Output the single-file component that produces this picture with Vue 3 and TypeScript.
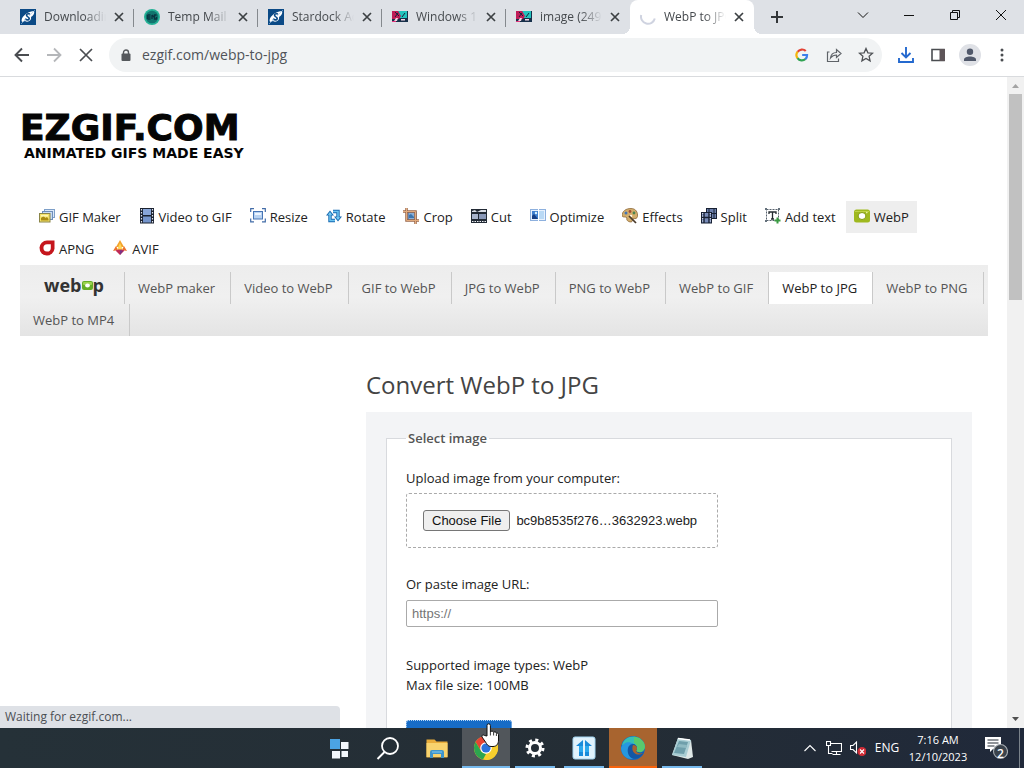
<script setup lang="ts">
import { ref } from 'vue'

interface Tab { title: string; icon: string; active?: boolean }
interface Tool { label: string; icon: string; active?: boolean }
interface TaskApp { name: string; icon: string; state: string }

const stardock = '<rect width="16" height="16" fill="#0b4a86"/><path d="M2 13C0 9 6 3 14 2c1 2-1 5-3 6 1 3-3 6-6 4z" fill="#fff"/><path d="M10 5C7 4 5 6 8 8s0 4-3 2" fill="none" stroke="#0b4a86" stroke-width="1.6"/><path d="M1 15L15 1" stroke="#9fc3e6" stroke-width=".6"/>'
const mail = '<circle cx="8" cy="8" r="8" fill="#24b196"/><circle cx="8" cy="8" r="6.3" fill="#12746e"/><path d="M3.500 6h3M3.500 8h3M3.500 10h3M3.500 6v4M8 6v4M8 6l2 2M12.500 6h-2v4h2V8" fill="none" stroke="#0a3440" stroke-width="1.300"/>'
const monitor = '<rect y="2" width="16" height="11" fill="#17304a"/><path d="M6 2h9v7H8z" fill="#22c3bd"/><path d="M0 2h6l3 5-2 3H0z" fill="#c01d58"/><path d="M3 3l4 4M6 4L3 8M10 8l3-4" stroke="#14233a"/><path d="M2 12l2-3h2l-1 3zM9 11.500h4v-1.500H9z" fill="#f5d6e4"/><path d="M0 12h4v1H0z" fill="#e2307a"/>'
const spinner = '<path d="M1.200 6A7 7 0 0 0 14.800 9.500" fill="none" stroke="#cfd3e0" stroke-width="2"/>'

const tabs: Tab[] = [
  { title: 'Downloading', icon: stardock },
  { title: 'Temp Mail -', icon: mail },
  { title: 'Stardock Ac', icon: stardock },
  { title: 'Windows 11', icon: monitor },
  { title: 'image (249×', icon: monitor },
  { title: 'WebP to JPG', icon: spinner, active: true },
]

const tools: Tool[] = [
  { label: 'GIF Maker', icon: '<rect x="5.500" y="1.500" width="10" height="8" fill="#dceafa" stroke="#7d9fc8"/><rect x="3.500" y="3.500" width="10" height="8" fill="#c8dcf5" stroke="#6f8fba"/><rect x=".5" y="5.500" width="10.500" height="8.500" fill="#f5e36a" stroke="#8a8548"/><path d="M2 12.500V10l2.500-2 2 2 1.500-1 1.500 2v1.500z" fill="#a98b13"/><path d="M2 7h7v1.500H2z" fill="#fff6b4"/>' },
  { label: 'Video to GIF', icon: '<rect x="1" width="14" height="15.500" fill="#1b2230"/><rect x="4" y="1" width="8" height="6" fill="#87a5d8"/><rect x="4" y="8.500" width="8" height="6" fill="#7595cc"/><path d="M2.500 1v14M13.500 1v14" stroke="#dfe6f2" stroke-width="1.200" stroke-dasharray="1.500 1.500"/>' },
  { label: 'Resize', icon: '<rect x="3.500" y="3.500" width="9" height="7.500" fill="#b9d3f2" stroke="#4674b5"/><rect x="5" y="5" width="6" height="2" fill="#edf5ff"/><path d="M.7 4V.7H4M12 .7h3.300V4M15.300 10.500v3.300H12M4 13.800H.7v-3.300" fill="none" stroke="#426ca8" stroke-width="1.200"/>' },
  { label: 'Rotate', icon: '<path d="M7 3.500h5V10M9 12.500H4V6" fill="none" stroke="#1769b0" stroke-width="3.400"/><path d="M8 8.500h8l-4 5zM0 7.500l4-5 4 5z" fill="#1769b0"/><path d="M7 3.500h5V10M9 12.500H4V6" fill="none" stroke="#6cc5f2" stroke-width="1.500"/><path d="M9.800 9.300h4.400L12 12zM1.800 6.700L4 4l2.200 2.700z" fill="#78cdf5"/>' },
  { label: 'Crop', icon: '<rect x="5" y="4" width="8" height="8" fill="#88afd9" stroke="#415f91"/><path d="M3.500 0v12.500H16M0 3.500h12.500V16" fill="none" stroke="#9b6749" stroke-width="2.500"/><path d="M3.500 0v12.500H16M0 3.500h12.500V16" fill="none" stroke="#e1ab7e"/><path d="M6 10V7l2-1 3 3v1z" fill="#3c75ae"/>' },
  { label: 'Cut', icon: '<rect y="1" width="16" height="14" fill="#222a35"/><path d="M1 3l3-1 2 2 4-2h5v2H1z" fill="#d9dde6"/><rect x="1" y="6" width="6" height="5" fill="#a8b4cc"/><rect x="8" y="6" width="7" height="5" fill="#8998b8"/><path d="M1 13.500h14" stroke="#edf0f5" stroke-width="1.200" stroke-dasharray="1.500 1"/>' },
  { label: 'Optimize', icon: '<rect x=".5" y="1.500" width="15" height="11" fill="#e8f1fd" stroke="#8db0de"/><rect x="2" y="3" width="6" height="8" fill="#3f80d0"/><path d="M2 11V8l2-2 4 5z" fill="#153e85"/><circle cx="6" cy="5" r="1.200" fill="#d9f2ff"/><rect x="9" y="3" width="5" height="8" fill="#b9d9f5"/><path d="M8.500 0v14" stroke="#fff"/>' },
  { label: 'Effects', icon: '<path d="M0 8C0 3 4 .5 9 .5s7 4 6.500 8c-.5 2-2 2.500-4 2L9.500 14C6 14 4 12 5 10 3.500 8 2 10 0 8z" fill="#d3ae6c" stroke="#8d6737" stroke-width=".8"/><circle cx="4" cy="5" r="1.500" fill="#4374b4"/><circle cx="8" cy="3.500" r="1.400" fill="#a44e35"/><circle cx="12" cy="5" r="1.400" fill="#4c8450"/><circle cx="9" cy="8" r="1.300" fill="#fff6e0"/><path d="M7 8l7 7" stroke="#4a3a2b" stroke-width="1.700"/>' },
  { label: 'Split', icon: '<g stroke="#172033"><rect x="5.500" y=".5" width="10" height="10" fill="#6c80ad"/><path d="M8 .5v10M13 .5v10M5.500 5.500h10"/><rect x=".5" y="4.500" width="10" height="10.500" fill="#788bb8"/><path d="M3 4.500V15M8 4.500V15M.5 9.500h10" stroke-width="1.400"/></g><path d="M1.700 5v10M9.300 5v10" stroke="#e6ebf5" stroke-dasharray="1 1.500"/>' },
  { label: 'Add text', icon: '<rect x="1.500" y="1.500" width="12" height="11" fill="#fff" stroke="#56616c" stroke-dasharray="2 1"/><path d="M4 6V4h7v2M7.500 4v7M6 11h3" fill="none" stroke="#252b30" stroke-width="1.300"/><path d="M0 0h2v2H0zM13 0h2v2h-2zM0 12h2v2H0z" fill="#65717c"/><path d="M12.500 9.500v6M9.500 12.500h6" stroke="#3b9b43" stroke-width="2"/>' },
  { label: 'WebP', icon: '<rect y="1.500" width="16" height="13" rx="2.500" fill="#9fb91f"/><path d="M1 3.500h14" stroke="#bfd345"/><ellipse cx="8" cy="8" rx="3.900" ry="3.500" fill="#fff" stroke="#829c10"/><circle cx="12.800" cy="4.600" r=".8" fill="#e9f3ac"/>', active: true },
  { label: 'APNG', icon: '<path d="M15.500.5v8A7.500 7.500 0 1 1 8 .5z" fill="#c5161d"/><path d="M11.800 4.200v4a3.700 3.700 0 1 1-3.600-4z" fill="#fff"/>' },
  { label: 'AVIF', icon: '<path d="M8 0l4 7H4z" fill="#f3a32b"/><path d="M4 6L1 11l5-1zM12 6l3 5-5-1z" fill="#ee742d"/><path d="M8 3l3 7H5z" fill="#ffd65a"/><path d="M3.500 10.500L6 9.500h4l2.500 1L8 15z" fill="#c02a55"/><path d="M8 10v5l3-4z" fill="#783487"/>' },
]

const converters = ['WebP maker', 'Video to WebP', 'GIF to WebP', 'JPG to WebP', 'PNG to WebP', 'WebP to GIF', 'WebP to JPG', 'WebP to PNG', 'WebP to MP4']

const apps: TaskApp[] = [
  { name: 'Start', state: '', icon: '<path d="M3 3h10v10H3z" fill="#4ba3e3"/><path d="M14 6h7.500v7H14zM5 15h8v7.500H5zM14.500 15h6.500v6H14.500z" fill="#f2f7fc"/>' },
  { name: 'Search', state: '', icon: '<circle cx="14" cy="10" r="8" fill="none" stroke="#fff" stroke-width="1.800"/><path d="M8.500 16L1.500 23" stroke="#fff" stroke-width="2"/>' },
  { name: 'File Explorer', state: '', icon: '<path d="M1.500 3.500h8l2 2h11v16h-21z" fill="#e9ad3b"/><path d="M1.500 7h21v14h-21z" fill="#f8d36e"/><path d="M5 22v-6q0-2 2-2h10q2 0 2 2v6h-3v-4H8v4z" fill="#3f94ca"/><path d="M7 15h10v2H7z" fill="#5fb0df"/>' },
  { name: 'Chrome', state: 'current', icon: '<circle cx="12" cy="12" r="12" fill="#f8cf2d"/><path d="M1.600 6A12 12 0 0 1 22.400 6H12l-5 9z" fill="#e54335"/><path d="M1.600 6l6 10 4.400 2-3 5.600A12 12 0 0 1 1.600 6z" fill="#2da54f"/><path d="M11.500 24l6-9L12 6h10.400A12 12 0 0 1 11.500 24z" fill="#f8cf2d"/><circle cx="12" cy="12" r="5.800" fill="#fff"/><circle cx="12" cy="12" r="4.600" fill="#2b72dc"/>' },
  { name: 'Settings', state: 'open', icon: '<circle cx="12" cy="12" r="5.500" fill="none" stroke="#fff" stroke-width="3"/><circle cx="12" cy="12" r="8" fill="none" stroke="#fff" stroke-width="3" stroke-dasharray="3 3.283"/>' },
  { name: 'Start11', state: 'open', icon: '<rect x="1" y="1" width="22" height="22" rx="2" fill="#e0f2fc" stroke="#a3d6f3"/><path d="M4 10l7-6v16H7v-10zM20 10l-7-6v16h4v-10z" fill="#188bda"/><path d="M7 10h4v6H7zM13 10h4v6h-4z" fill="#2ba8ed"/>' },
  { name: 'Edge', state: 'alert', icon: '<circle cx="12" cy="12" r="12" fill="#1768bd"/><path d="M1 9C3-1 18-3 23 7c3 7-3 10-8 8 3-4-1-8-6-7C4 8 2 11 1 9z" fill="#36bfb5"/><path d="M13 1c8 0 13 8 10 13-2 3-6 3-8 1 3-3 1-6-2-8z" fill="#58ca6d"/><path d="M9 8c5-1 9 3 6 7 2 2 6 2 8 1-2 5-7 8-12 6C5 20 4 10 9 8z" fill="#1357a5"/><path d="M0 12C2 6 9 5 12 8c-7 0-7 12 0 15C5 24 0 18 0 12z" fill="#2698df"/><path d="M12 9c4 0 5 3 3 6 1 2 4 3 7 2-5 4-13 0-10-8z" fill="#a8642f"/>' },
  { name: 'Notepad', state: 'open', icon: '<path d="M8 2l13 2 2 17-5 2-16-4z" fill="#dfe8e7"/><path d="M8 2l13 2-5 17-14-2z" fill="#a9cdd3"/><path d="M9 5l9 1-4 12-10-1z" fill="#6f9fab"/><path d="M9 8l8 1-1 3-9-1z" fill="#8fbac2"/><path d="M8 2.500l12 1.500" stroke="#fff" stroke-width="1.500"/>' },
]

const url = ref('')
const address = ref('ezgif.com/webp-to-jpg')
const picker = ref<HTMLInputElement | null>(null)
const fileName = ref('bc9b8535f276…3632923.webp')
function onPick(e: Event) {
  const f = (e.target as HTMLInputElement).files?.[0]
  if (f) fileName.value = f.name
}
</script>

<template>
  <div class="desktop">
    <section class="browser">
      <div class="tabstrip">
        <div v-for="tab in tabs" :key="tab.title" class="tab" :class="{ active: tab.active }">
          <svg class="i16" viewBox="0 0 16 16" v-html="tab.icon" />
          <span class="tab-title">{{ tab.title }}</span>
          <button class="tab-close" aria-label="Close tab"><svg viewBox="0 0 10 10"><path d="M1 1l8 8M9 1L1 9" /></svg></button>
        </div>
        <button class="new-tab" aria-label="New tab"><svg viewBox="0 0 12 12"><path d="M6 0v12M0 6h12" /></svg></button>
        <div class="window-controls">
          <button aria-label="Search tabs"><svg viewBox="0 0 12 12"><path d="M1 3.500l5 5 5-5" /></svg></button>
          <button aria-label="Minimize"><svg viewBox="0 0 12 12"><path d="M1 6.500h10" /></svg></button>
          <button aria-label="Restore"><svg viewBox="0 0 12 12"><path d="M1.500 3.500h7v7h-7zM3.500 3.500v-2h7v7h-2" /></svg></button>
          <button aria-label="Close"><svg viewBox="0 0 12 12"><path d="M1 1l10 10M11 1L1 11" /></svg></button>
        </div>
      </div>

      <div class="toolbar">
        <button class="tb" aria-label="Back"><svg viewBox="0 0 16 16"><path d="M15 8H2M8 1.500L1.500 8 8 14.500" stroke="#4a4d51" stroke-width="1.900" /></svg></button>
        <button class="tb" aria-label="Forward"><svg viewBox="0 0 16 16"><path d="M1 8h13M8 1.500L14.500 8 8 14.500" stroke="#b5b7ba" stroke-width="1.800" /></svg></button>
        <button class="tb" aria-label="Stop"><svg viewBox="0 0 16 16"><path d="M2 2l12 12M14 2L2 14" stroke="#4a4d51" stroke-width="1.700" /></svg></button>
        <div class="omnibox">
          <svg class="lock" viewBox="0 0 10 13"><path d="M2.500 5V3.500a2.500 2.500 0 0 1 5 0V5" fill="none" stroke="#55585c" stroke-width="1.400" /><rect x=".5" y="4.500" width="9" height="7.500" rx="1" fill="#55585c" /></svg>
          <input v-model="address" class="address" aria-label="Address" />
          <button class="tb" aria-label="Google Search">
            <svg class="g" viewBox="0 0 16 16"><path d="M3 4.500A6 6 0 0 1 12.300 3.500" stroke="#e34133" /><path d="M3 4.300a6 6 0 0 0 0 7.400" stroke="#f4b60b" /><path d="M2.900 11.500A6 6 0 0 0 12 12.500" stroke="#31a353" /><path d="M8.200 8h5.600a6 6 0 0 1-2 4.800" stroke="#3d7fea" /></svg>
          </button>
          <button class="tb" aria-label="Share"><svg viewBox="0 0 16 16"><path d="M3.500 5H1.500v9.500h11v-3M4.500 11C5 7 7.500 5.500 10.500 5.500v-3L15 6.500 10.500 10.500V8C8 8 6 9 4.500 11z" stroke="#5f6368" stroke-width="1.200" /></svg></button>
          <button class="tb" aria-label="Bookmark"><svg viewBox="0 0 16 16"><path d="M8 1.500l1.900 4.300 4.700.4-3.500 3.100 1 4.600L8 11.500l-4.100 2.400 1-4.600L1.400 6.200l4.700-.4z" stroke="#4f5256" stroke-width="1.300" /></svg></button>
        </div>
        <button class="tb" aria-label="Downloads"><svg viewBox="0 0 16 16"><path d="M8 0v10M3.500 6L8 10.500 12.500 6M1 11v4h14v-4" stroke="#2469cf" stroke-width="1.900" /></svg></button>
        <button class="tb" aria-label="Side panel"><svg viewBox="0 0 16 16"><path d="M2 2.500h12v11H2z" stroke="#4a4d51" stroke-width="1.600" /><path d="M9.500 2H15v12H9.500z" fill="#5d5558" /></svg></button>
        <button class="tb" aria-label="Profile"><svg class="avatar" viewBox="0 0 22 22"><circle cx="11" cy="11" r="11" fill="#dfe1e6" /><circle cx="11" cy="7.800" r="3.200" fill="#50586a" /><path d="M5 17v-1.500c0-4 12-4 12 0V17z" fill="#50586a" /></svg></button>
        <button class="tb" aria-label="Menu"><svg viewBox="0 0 16 16"><g fill="#4a4d51"><circle cx="8" cy="3" r="1.500" /><circle cx="8" cy="8" r="1.500" /><circle cx="8" cy="13" r="1.500" /></g></svg></button>
      </div>

      <div class="viewport">
        <div class="page">
          <a class="brand" href="#">
            <span class="brand-name">EZGIF.COM</span>
            <span class="brand-tag">ANIMATED GIFS MADE EASY</span>
          </a>
          <nav class="tools" aria-label="Tools">
            <a v-for="tool in tools" :key="tool.label" href="#" :class="{ active: tool.active }">
              <svg class="i16" viewBox="0 0 16 16" v-html="tool.icon" />{{ tool.label }}
            </a>
          </nav>
          <nav class="converters" aria-label="WebP tools">
            <a class="webp-logo" href="#" aria-label="WebP"><span>web</span><svg viewBox="0 0 11 9"><rect width="11" height="9" rx="2" fill="#65ad27" /><rect x="1" y="1" width="9" height="3" rx="1" fill="#9bd34f" /><ellipse cx="5.500" cy="4.500" rx="2.400" ry="2" fill="#fff" /></svg><span>p</span></a>
            <a v-for="name in converters" :key="name" href="#" :class="{ active: name === 'WebP to JPG' }">{{ name }}</a>
          </nav>

          <main>
            <h1>Convert WebP to JPG</h1>
            <form class="panel" @submit.prevent>
              <fieldset>
                <legend>Select image</legend>
                <label for="file">Upload image from your computer:</label>
                <div class="drop">
                  <input id="file" ref="picker" type="file" accept="image/webp" class="native-file" @change="onPick" />
                  <button type="button" class="choose" @click="picker?.click()">Choose File</button>
                  <span>{{ fileName }}</span>
                </div>
                <label for="url">Or paste image URL:</label>
                <input id="url" v-model="url" class="url" type="text" placeholder="https://" />
                <p>Supported image types: WebP<br />Max file size: 100MB</p>
                <button type="submit" class="submit">Upload!</button>
              </fieldset>
            </form>
          </main>
        </div>
        <div class="scrollbar">
          <svg viewBox="0 0 9 5"><path d="M0 5l4.500-5L9 5z" fill="#a3a3a3" /></svg>
          <div class="track"><div class="thumb" /></div>
          <svg viewBox="0 0 9 5"><path d="M0 0l4.500 5L9 0z" fill="#505050" /></svg>
        </div>
        <div class="status">Waiting for ezgif.com...</div>
      </div>
    </section>

    <footer class="taskbar">
      <div class="apps">
        <button v-for="app in apps" :key="app.name" :class="app.state" :aria-label="app.name">
          <svg viewBox="0 0 24 24" v-html="app.icon" />
        </button>
      </div>
      <div class="tray">
        <button aria-label="Show hidden icons"><svg class="i16" viewBox="0 0 16 16"><path d="M2.500 11L8 5.500l5.500 5.500" /></svg></button>
        <button aria-label="Network"><svg class="i16" viewBox="0 0 16 16"><path d="M4.500 3.500h11v8h-10M10.500 11.500v3M6.500 14.500h8M.5 1.500h4v4h-4zM2.500 5.500v8h4" /></svg></button>
        <button aria-label="Volume muted"><svg class="i16" viewBox="0 0 16 16"><path d="M.5 5.500H3l3.500-3.500v11L3 9.500H.5z" /><circle cx="12" cy="11.500" r="4.500" fill="#d02c36" stroke="none" /><path d="M10 9.500l4 4M14 9.500l-4 4" /></svg></button>
        <button class="lang">ENG</button>
        <button class="clock">7:16 AM<br />12/10/2023</button>
        <button class="notices" aria-label="Notifications">
          <svg viewBox="0 0 24 24"><path d="M1 1h16v12H9l-3 3v-3H1z" fill="#fff" stroke="none" /><path d="M3.500 4h11M3.500 7h11M3.500 10h7" stroke="#222b35" /><circle cx="16.500" cy="15.500" r="7" fill="#3a424b" stroke="#a7adb3" /></svg>
          <span>2</span>
        </button>
      </div>
    </footer>

    <svg class="cursor" viewBox="0 0 18 24"><path d="M6 13V2.500a1.700 1.700 0 0 1 3.400 0V9c.5-1.300 3-1.200 3.200.4 1-1 2.600-.5 2.800.9 1-.6 2.100 0 2.100 1.400V17c0 4-2 6.500-5.500 6.500H10c-3 0-4-2-5.500-4.500L1 14c-.8-1.500 1-2.800 2.500-1.500z" fill="#fff" stroke="#111" /><path d="M9.400 9v3.500M12.600 9.500v3M15.400 10.500v2.500" stroke="#222" stroke-width=".9" /></svg>
  </div>
</template>

<style>
html, body { margin: 0; overflow: hidden; }
</style>

<style scoped>
* { box-sizing: border-box; }
.desktop { display: flex; flex-direction: column; height: 100vh; position: relative; font: 13px/20px "Open Sans", "Noto Sans", sans-serif; color: #222; overflow: hidden; }
button { border: 0; padding: 0; background: none; font: inherit; color: inherit; display: flex; align-items: center; justify-content: center; }
a { color: inherit; text-decoration: none; }
svg { display: block; flex: none; }
.i16 { width: 16px; height: 16px; }

.browser { flex: 1; min-height: 0; display: flex; flex-direction: column; background: #fff; }
.tabstrip { display: flex; height: 34px; padding-left: 10px; background: #dee1e6; flex: none; }
.tab { flex: 0 1 124px; min-width: 0; display: flex; align-items: center; padding: 0 10px; position: relative; font-size: 12px; color: #45494d; }
.tab::after { content: ""; position: absolute; right: 0; top: 9px; width: 1px; height: 18px; background: #85898e; }
.tab:nth-child(5)::after { display: none; }
.tab.active { background: #fff; border-radius: 8px 8px 0 0; }
.tab.active::before, .tab.active::after { content: ""; display: block; position: absolute; top: auto; bottom: 0; width: 8px; height: 8px; }
.tab.active::before { left: -8px; background: radial-gradient(circle at 0 0, #dee1e6 8px, #fff 8px); }
.tab.active::after { right: -8px; background: radial-gradient(circle at 100% 0, #dee1e6 8px, #fff 8px); }
.tab-title { flex: 1; min-width: 0; margin: 0 8px; overflow: hidden; white-space: nowrap; mask-image: linear-gradient(90deg, #000 65%, transparent); }
.tab-close svg { width: 10px; height: 10px; stroke: #3c4043; stroke-width: 1.7; }
.new-tab { width: 46px; }
.new-tab svg { width: 12px; height: 12px; stroke: #333639; stroke-width: 2; }
.window-controls { display: flex; margin-left: auto; height: 30px; }
.window-controls button { width: 46px; }
.window-controls svg { width: 12px; height: 12px; fill: none; stroke: #111; }

.toolbar { display: flex; align-items: center; height: 43px; flex: none; padding: 0 6px; border-bottom: 1px solid #d9dbde; }
.tb { width: 32px; height: 32px; flex: none; }
.tb svg { width: 16px; height: 16px; fill: none; }
.tb svg.g { width: 14px; height: 14px; stroke-width: 2.5; }
.tb svg.avatar { width: 22px; height: 22px; }
.omnibox { flex: 1; min-width: 0; display: flex; align-items: center; height: 34px; margin: 0 8px 0 7px; padding: 0 0 0 12px; border-radius: 17px; background: #f1f3f4; }
.lock { width: 10px; height: 13px; }
.address { flex: 1; min-width: 0; margin-left: 11px; padding: 0; border: 0; background: none; outline: 0; font: inherit; font-size: 14px; color: #505459; }

.viewport { flex: 1; min-height: 0; display: flex; position: relative; overflow: hidden; }
.page { flex: 1; min-width: 0; padding: 34px 19px 0 20px; overflow: hidden; }
.brand { display: flex; flex-direction: column; align-items: flex-start; font-family: "DejaVu Sans", sans-serif; font-weight: 700; color: #050505; height: 90px; white-space: nowrap; }
.brand-name { font-size: 36px; line-height: 34px; -webkit-text-stroke: 1px #050505; }
.brand-tag { font-size: 14px; line-height: 16px; padding-left: 4px; }
.tools { display: flex; flex-wrap: wrap; column-gap: 2px; padding: 0 11px; }
.tools a { display: flex; align-items: center; gap: 4px; height: 32px; padding: 0 8px; }
.tools a svg { margin-bottom: 2px; }
.tools a.active { background: #eee; }
.converters { display: flex; flex-wrap: wrap; padding-top: 7px; background: linear-gradient(#ededed, #f0f0f0 45%, #e4e4e4); color: #555; }
.converters a { height: 32px; line-height: 32px; padding: 0 15px 0 13px; border-right: 1px solid #c9c9c9; }
.converters a.active { background: #fff; color: #222; }
.converters .webp-logo { display: flex; width: 105px; justify-content: center; align-items: center; font-size: 18px; line-height: 26px; padding: 0 0 6px 4px; font-weight: 700; color: #333; }
.webp-logo svg { width: 11px; height: 9px; }

main { width: 606px; margin: 32px 16px 0 auto; }
h1 { margin: 0; font-size: 24px; line-height: 34px; font-weight: 400; color: #444; }
.panel { margin-top: 10px; padding: 16px 20px 20px; background: #f3f4f6; }
fieldset { margin: 0; padding: 0 19px 20px; border: 1px solid #d8dade; background: #fff; }
legend { padding: 0 2px; font-weight: 600; color: #555; }
fieldset label { display: block; }
legend + label { margin-top: 20px; }
.drop { display: flex; align-items: center; gap: 6px; width: 312px; height: 55px; margin: 5px 0 26px; padding: 0 16px; border: 1px dashed #aaa; border-radius: 3px; font: 13px/16px "Liberation Sans", sans-serif; white-space: nowrap; }
.native-file { display: none; }
.choose { height: 21px; padding: 0 8px; border: 1px solid #767676; border-radius: 3px; background: #efefef; color: #111; }
.url { display: block; width: 312px; height: 27px; margin-top: 6px; padding: 0 5px; border: 1px solid #aaa; border-radius: 2px; background: #fff; font: 13px "Liberation Sans", sans-serif; }
.url::placeholder { color: #757575; }
p { margin: 28px 0 25px; }
.submit { width: 106px; height: 34px; border: 1px dotted #b9d8f8; border-radius: 3px; background: #176cc7; color: #fff; }

.scrollbar { width: 17px; flex: none; display: flex; flex-direction: column; align-items: center; padding: 7px 0; background: #f1f1f1; }
.scrollbar svg { width: 7px; height: 4px; }
.track { flex: 1; width: 13px; padding-top: 6px; }
.thumb { height: 33%; background: #c1c1c1; }
.status { position: absolute; left: 0; bottom: 0; width: 340px; height: 22px; padding: 0 5px; font-size: 12px; line-height: 22px; color: #4b4f54; background: #dee1e6; border-radius: 0 4px 0 0; }

.taskbar { display: grid; grid-template-columns: 1fr auto 1fr; height: 40px; flex: none; background: linear-gradient(90deg, #253138, #242d35 60%, #20293a); color: #fff; font-size: 12px; }
.apps { grid-column: 2; display: flex; gap: 1px; padding-right: 3px; }
.apps button { width: 48px; }
.apps button svg { width: 24px; height: 24px; }
.apps .open { background: linear-gradient(#76b9ed, #76b9ed) 4px 100% / 40px 2px no-repeat; }
.apps .current { background: linear-gradient(#76b9ed, #76b9ed) 0 100% / 100% 2px no-repeat #51565b; }
.apps .alert { background: linear-gradient(#f7630c, #f7630c) 0 100% / 100% 2px no-repeat #a8642f; }
.tray { display: flex; justify-content: flex-end; padding-right: 4px; }
.tray button { width: 24px; }
.tray svg { fill: none; stroke: #fff; stroke-width: 1.1; }
.tray .lang { width: 34px; }
.tray .clock { width: 68px; display: block; font-size: 11px; line-height: 17px; text-align: center; }
.tray .notices { width: 48px; position: relative; border-right: 1px solid #7a828a; }
.notices svg { width: 24px; height: 24px; }
.notices span { position: absolute; left: 25px; top: 16px; font-weight: 600; }
.cursor { position: absolute; left: 481px; bottom: 21px; width: 18px; height: 24px; fill: none; }
</style>
